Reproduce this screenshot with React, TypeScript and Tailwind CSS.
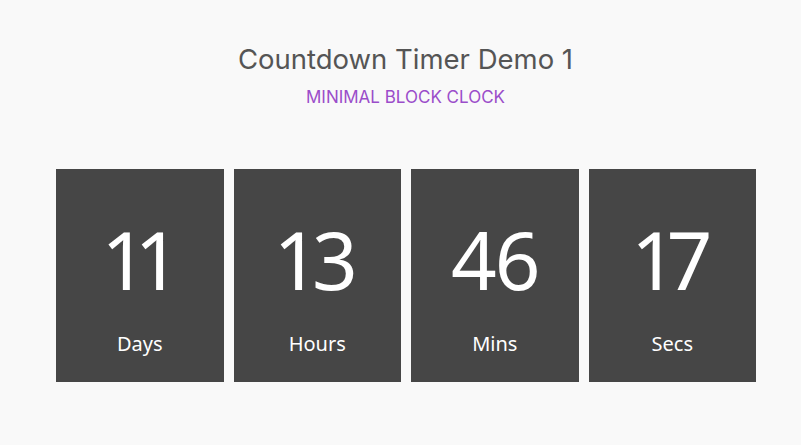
import React from "react";

const items = [
  { v: "11", l: "Days" },
  { v: "13", l: "Hours" },
  { v: "46", l: "Mins" },
  { v: "17", l: "Secs" },
];

export default function App() {
  return (
    <div className="w-[801px] h-[445px] bg-[#f9f9f9] flex flex-col pt-[40px] pl-[56px]">
      <div className="w-[699px] flex flex-col items-center">
        <h1 className="text-[27.5px] leading-[38px] text-[#555555] font-['Inter',sans-serif] font-normal">
          Countdown Timer Demo 1
        </h1>
        <div className="mt-[8px] text-[17px] leading-[22px] text-[#9b4dca] font-['Inter',sans-serif]">
          MINIMAL BLOCK CLOCK
        </div>
      </div>
      <div className="mt-[61px] flex gap-[10px]">
        {items.map((it) => (
          <div
            key={it.l}
            className="w-[167.5px] h-[213px] bg-[#464646] flex flex-col items-center text-white font-['Noto_Sans',sans-serif]"
          >
            <div className="mt-[44px] text-[80px] leading-[92px] font-normal proportional-nums tracking-[-2px]">
              {it.v}
            </div>
            <div className="mt-[25px] text-[20px] leading-[28px]">{it.l}</div>
          </div>
        ))}
      </div>
    </div>
  );
}
